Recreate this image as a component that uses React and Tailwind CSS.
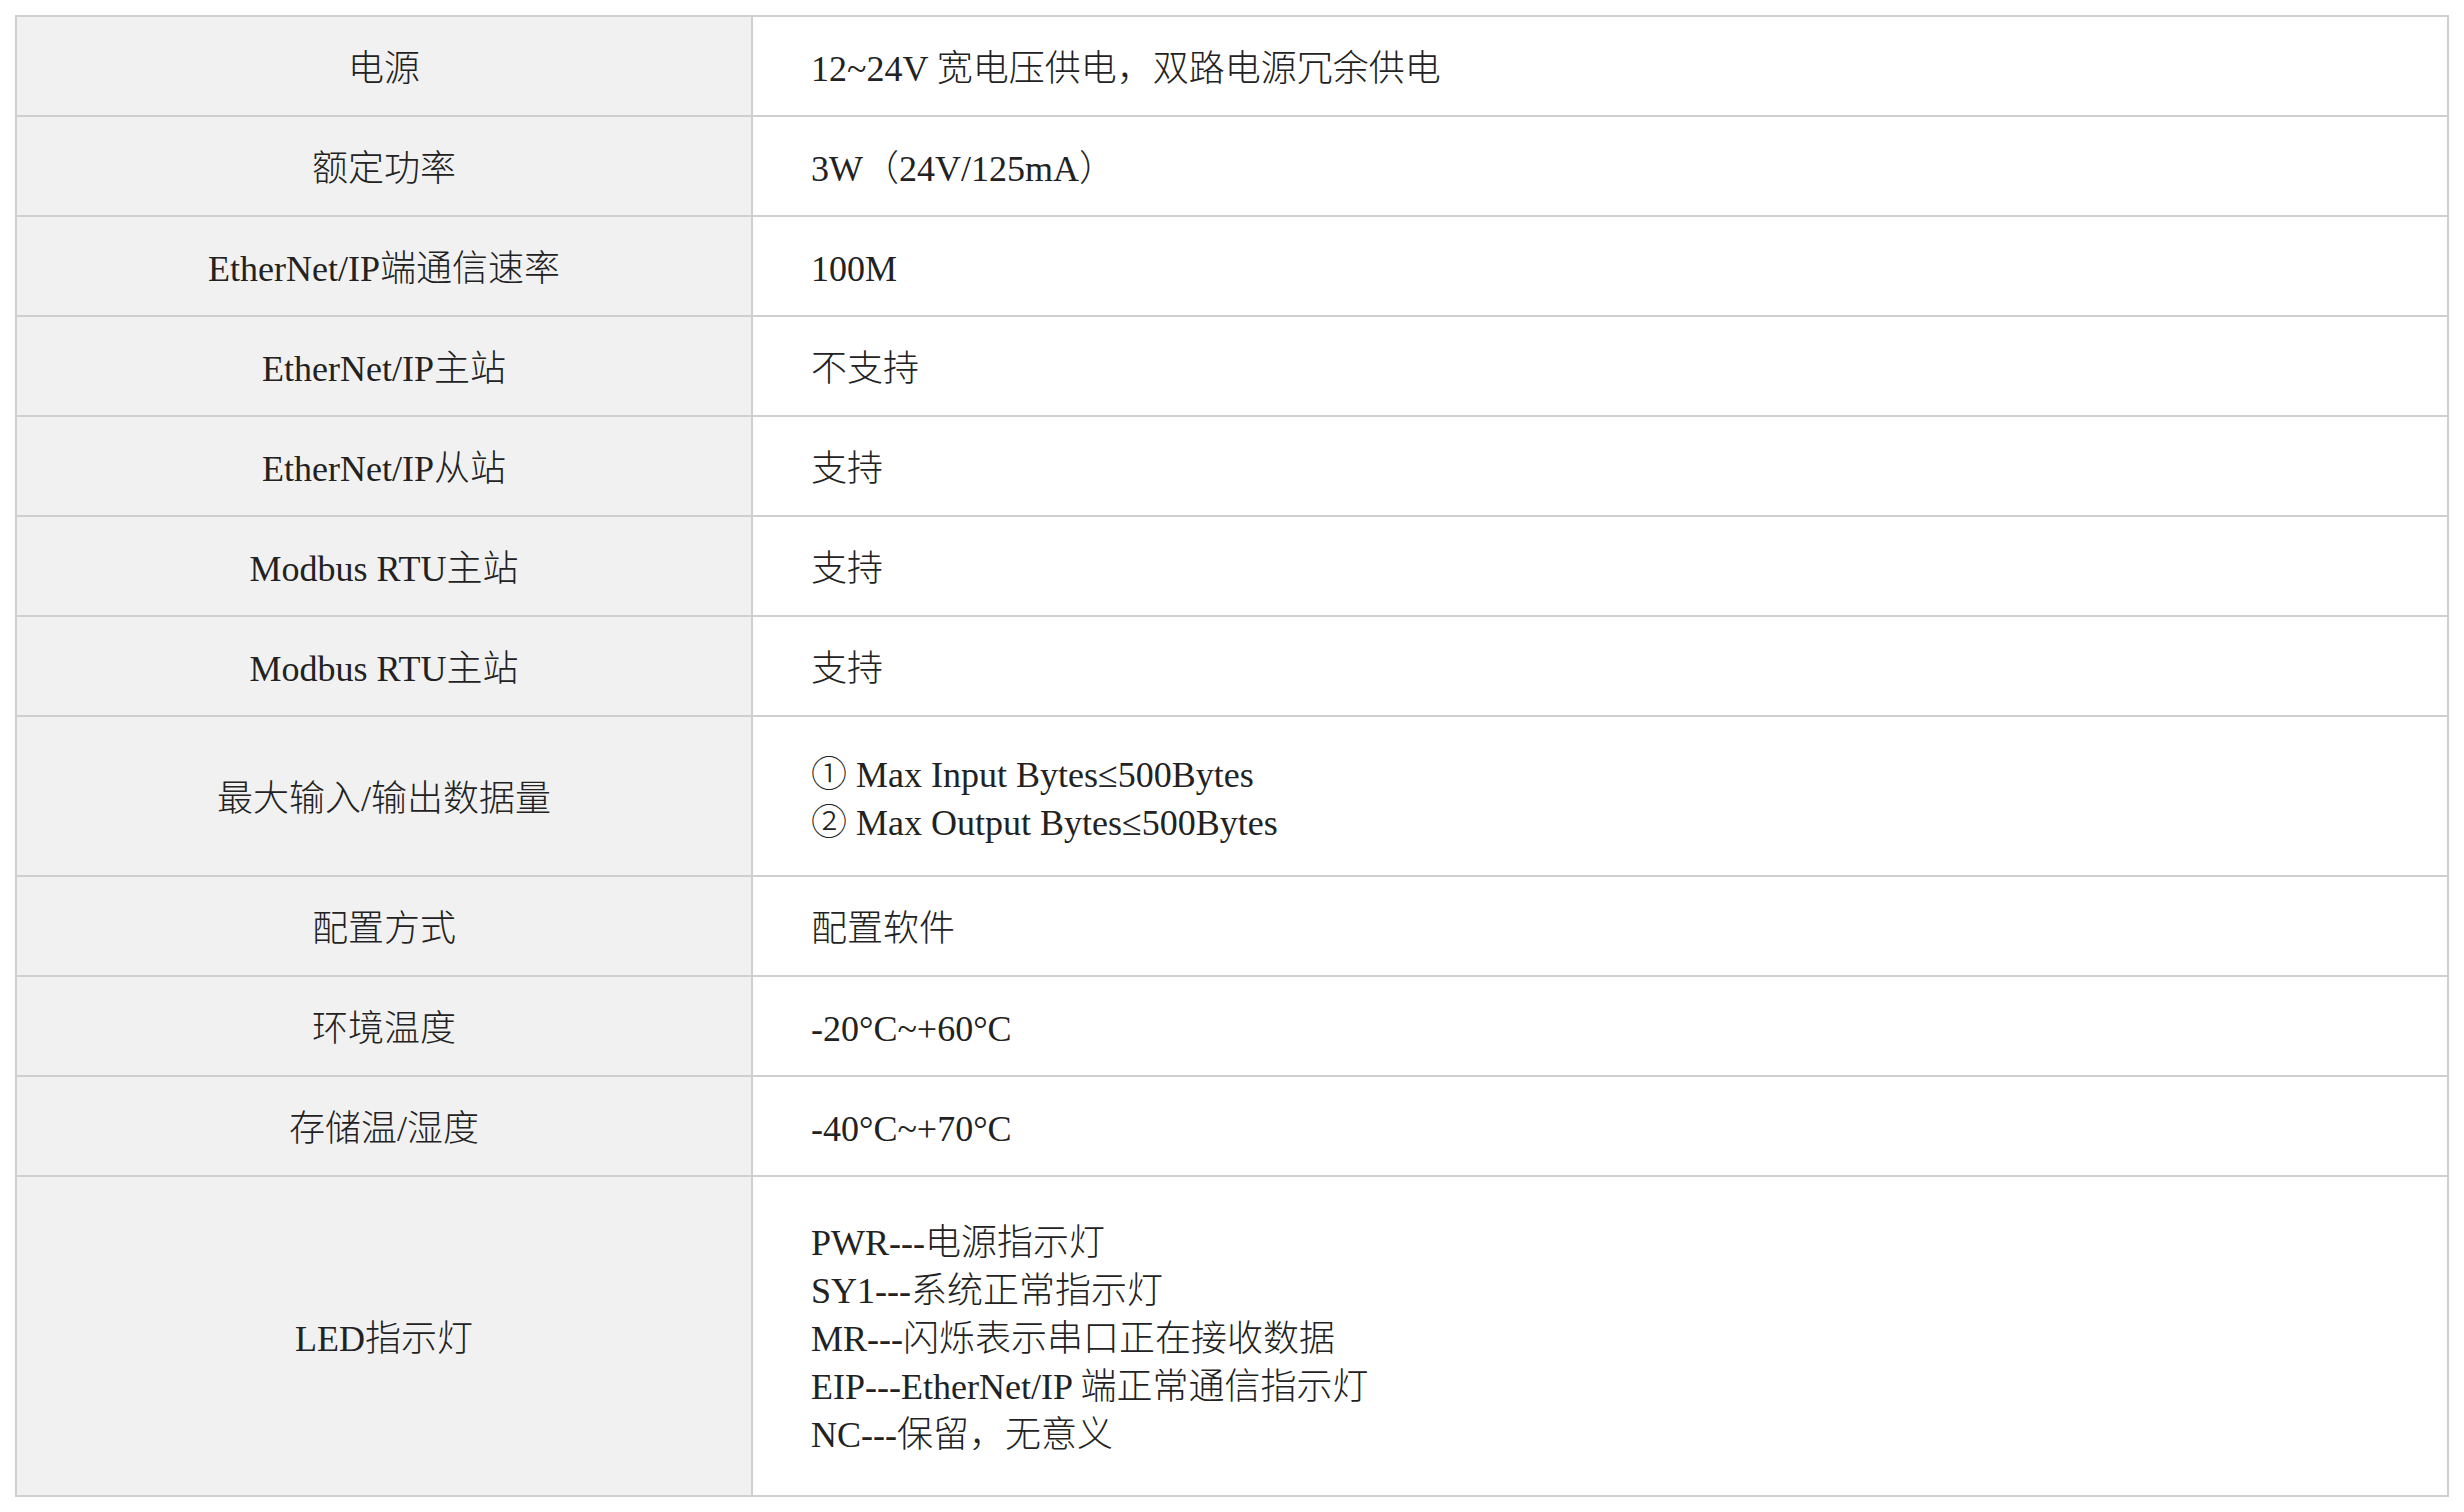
const rows = [
  { label: '电源', value: ['12~24V 宽电压供电，双路电源冗余供电'] },
  { label: '额定功率', value: ['3W（24V/125mA）'] },
  { label: 'EtherNet/IP端通信速率', value: ['100M'] },
  { label: 'EtherNet/IP主站', value: ['不支持'] },
  { label: 'EtherNet/IP从站', value: ['支持'] },
  { label: 'Modbus RTU主站', value: ['支持'] },
  { label: 'Modbus RTU主站', value: ['支持'] },
  {
    label: '最大输入/输出数据量',
    value: ['① Max Input Bytes≤500Bytes', '② Max Output Bytes≤500Bytes'],
    tall: 'h-[160px]',
  },
  { label: '配置方式', value: ['配置软件'] },
  { label: '环境温度', value: ['-20°C~+60°C'] },
  { label: '存储温/湿度', value: ['-40°C~+70°C'] },
  {
    label: 'LED指示灯',
    value: [
      'PWR---电源指示灯',
      'SY1---系统正常指示灯',
      'MR---闪烁表示串口正在接收数据',
      'EIP---EtherNet/IP 端正常通信指示灯',
      'NC---保留，无意义',
    ],
    tall: 'h-[320px]',
  },
];

const App = () => {
  return (
    <div className="min-h-screen bg-white pt-[15px] pl-[15px] font-['Liberation_Serif','Noto_Sans_CJK_SC',serif] font-light text-[36px] leading-[48px] text-[#222]">
      {/* Spec table */}
      <div className="w-[2434px] border-l-2 border-t-2 border-[#cfcfcf]">
        {rows.map((row, i) => (
          <div key={i} className={`flex ${row.tall || 'h-[100px]'}`}>
            <div className="w-[736px] shrink-0 flex items-center justify-center pt-[6px] bg-[#f1f1f1] border-r-2 border-b-2 border-[#cfcfcf]">
              <span>{row.label}</span>
            </div>
            <div className="flex-1 flex flex-col justify-center pt-[6px] pl-[58px] border-r-2 border-b-2 border-[#cfcfcf]">
              {row.value.map((line, j) => (
                <div key={j} className="whitespace-pre">{line}</div>
              ))}
            </div>
          </div>
        ))}
      </div>
    </div>
  );
};

export default App;
